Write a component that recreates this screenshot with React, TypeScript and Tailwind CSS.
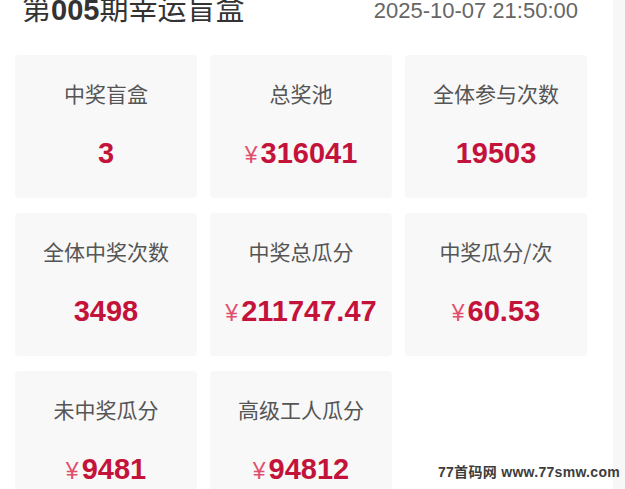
import React from 'react';

interface Stat {
  label: string;
  value: string;
  yuan?: boolean;
}

const stats: Stat[] = [
  { label: '中奖盲盒', value: '3' },
  { label: '总奖池', value: '316041', yuan: true },
  { label: '全体参与次数', value: '19503' },
  { label: '全体中奖次数', value: '3498' },
  { label: '中奖总瓜分', value: '211747.47', yuan: true },
  { label: '中奖瓜分/次', value: '60.53', yuan: true },
  { label: '未中奖瓜分', value: '9481', yuan: true },
  { label: '高级工人瓜分', value: '94812', yuan: true },
];

const StatCard: React.FC<{ stat: Stat }> = ({ stat }) => (
  <div className="h-[143px] rounded-[4px] bg-[#f8f8f8] flex flex-col items-center pt-[24px]">
    <p className="text-[21px] leading-[28px] text-[#555555] font-['Noto_Sans_CJK_SC',sans-serif]">
      {stat.label}
    </p>
    <p className="mt-[29px] leading-[34px] text-[#c4133a] font-['Liberation_Sans',Arial,sans-serif] font-bold text-[29px] flex items-baseline">
      {stat.yuan && <span className="text-[23px] font-normal text-[#e0506e] mr-[3px]">¥</span>}
      {stat.value}
    </p>
  </div>
);

export default function App() {
  return (
    <div className="relative w-[625px] h-[489px] overflow-hidden bg-white flex">
      <div className="w-[613px] shrink-0">
        {/* header */}
        <div className="flex items-end justify-between pl-[22px] pr-[35px] mt-[-5px] h-[30px]">
          <h1 className="text-[29px] leading-[30px] text-[#333333] font-['Noto_Sans_CJK_SC',sans-serif]">
            第<span className="font-['Liberation_Sans',Arial,sans-serif] font-bold">005</span>期幸运盲盒
          </h1>
          <span className="text-[22px] leading-[26px] text-[#666666] font-['Liberation_Sans',Arial,sans-serif] mb-[1px]">
            2025-10-07 21:50:00
          </span>
        </div>

        {/* stats grid */}
        <div className="grid grid-cols-[182px_182px_182px] gap-x-[13px] gap-y-[15px] pl-[15px] mt-[30px]">
          {stats.map((s) => (
            <StatCard key={s.label} stat={s} />
          ))}
        </div>
      </div>
      <div className="flex-1 bg-[#f7f7f7]" />

      {/* watermark */}
      <div className="absolute right-[5px] bottom-[7px] text-[14px] leading-[20px] font-bold text-[#3c3c3c] font-['Liberation_Sans','Noto_Sans_CJK_SC',sans-serif] tracking-[0.3px]">
        77首码网 www.77smw.com
      </div>
    </div>
  );
}
